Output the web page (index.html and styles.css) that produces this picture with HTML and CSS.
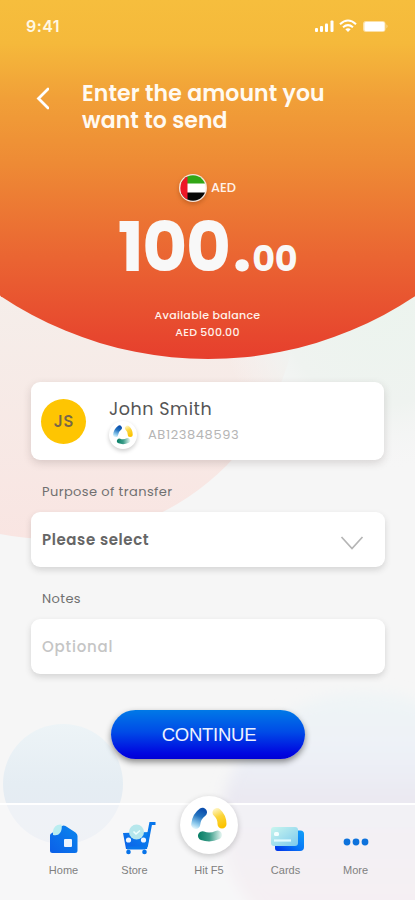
FILE: index.html
```html
<!DOCTYPE html>
<html lang="en">
<head>
<meta charset="utf-8">
<meta name="viewport" content="width=device-width, initial-scale=1">
<title>Send money</title>
<link rel="stylesheet" href="styles.css">
</head>
<body>
<svg class="symbols" width="0" height="0">
  <defs>
    <linearGradient id="swBlue" gradientUnits="userSpaceOnUse" x1="12" y1="3" x2="4" y2="22"><stop offset="0" stop-color="#0c50ae"/><stop offset=".35" stop-color="#2373bf"/><stop offset=".75" stop-color="#90cbed"/><stop offset="1" stop-color="#e8f8fd"/></linearGradient>
    <linearGradient id="swYellow" gradientUnits="userSpaceOnUse" x1="23" y1="2" x2="31" y2="20"><stop offset="0" stop-color="#fff5c4"/><stop offset=".45" stop-color="#fbd53c"/><stop offset="1" stop-color="#fcc300"/></linearGradient>
    <linearGradient id="swGreen" gradientUnits="userSpaceOnUse" x1="8" y1="0" x2="31" y2="0"><stop offset="0" stop-color="#0b8068"/><stop offset=".45" stop-color="#3a9c88"/><stop offset="1" stop-color="#eaf8f4"/></linearGradient>
    <linearGradient id="blue" x1="0" y1="1" x2="1" y2="0"><stop offset="0" stop-color="#0b5fe8"/><stop offset="1" stop-color="#0a86ee"/></linearGradient>
    <linearGradient id="mint" x1="0" y1="0" x2="1" y2="1"><stop offset="0" stop-color="#c9f6ee"/><stop offset="1" stop-color="#7cc9ee"/></linearGradient>
    <linearGradient id="cardBack" x1="0" y1="1" x2="1" y2="0"><stop offset="0" stop-color="#0030e8"/><stop offset=".5" stop-color="#0878f6"/><stop offset="1" stop-color="#12a0f8"/></linearGradient>
  </defs>
  <symbol id="swirl" viewBox="0 0 36 36">
    <g fill="none" stroke-width="9" stroke-linecap="round">
      <path d="M11.500 5.300Q5.500 9.500 4.700 17.500" stroke="url(#swBlue)"/>
      <path d="M26 5.500Q31 10 31 17" stroke="url(#swYellow)"/>
      <path d="M11.500 28.800Q19 31.500 26.500 28" stroke="url(#swGreen)"/>
    </g>
  </symbol>
</svg>
<div class="screen">
  <svg class="backdrop" width="415" height="900" viewBox="0 0 415 900" aria-hidden="true">
    <defs>
      <linearGradient id="sun" gradientUnits="userSpaceOnUse" x1="0" y1="0" x2="0" y2="360">
        <stop offset="0" stop-color="#f6be3d"/><stop offset=".12" stop-color="#f5b93b"/><stop offset=".27" stop-color="#f1a038"/><stop offset=".45" stop-color="#ee8b35"/><stop offset=".72" stop-color="#ea6432"/><stop offset="1" stop-color="#e63e2d"/>
      </linearGradient>
      <linearGradient id="rose" gradientUnits="userSpaceOnUse" x1="0" y1="290" x2="0" y2="540"><stop offset="0" stop-color="#f5eeea"/><stop offset="1" stop-color="#f9e5e2"/></linearGradient>
      <radialGradient id="sage" gradientUnits="userSpaceOnUse" cx="380" cy="310" r="160"><stop offset="0" stop-color="#ecf4ee"/><stop offset=".6" stop-color="#eff3f0"/><stop offset="1" stop-color="#f5f5f5" stop-opacity="0"/></radialGradient>
      <linearGradient id="sky" gradientUnits="userSpaceOnUse" x1="0" y1="723" x2="0" y2="845"><stop offset="0" stop-color="#edf4f7"/><stop offset=".5" stop-color="#e5edf3"/><stop offset="1" stop-color="#e5e9f2"/></linearGradient>
      <linearGradient id="lilac" gradientUnits="userSpaceOnUse" x1="0" y1="690" x2="0" y2="900"><stop offset="0" stop-color="#eff5f6"/><stop offset=".3" stop-color="#edf1f7"/><stop offset=".53" stop-color="#eae8f1"/><stop offset="1" stop-color="#f2e5ea"/></linearGradient>
      <filter id="soft"><feGaussianBlur stdDeviation="7"/></filter>
    </defs>
    <rect width="415" height="900" fill="#f6f6f6"/>
    <circle cx="50" cy="290" r="249" fill="url(#rose)"/>
    <circle cx="380" cy="310" r="160" fill="url(#sage)"/>
    <ellipse cx="363" cy="823" rx="142" ry="131" fill="url(#lilac)" filter="url(#soft)"/>
    <circle cx="63" cy="784" r="60" fill="url(#sky)"/>
    <circle cx="208" cy="-14" r="373" fill="url(#sun)"/>
  </svg>

  <header class="status">
    <span class="clock">9:41</span>
    <svg class="signals" width="76" height="14" viewBox="0 0 76 14" fill="#fff">
      <rect x="1" y="9" width="3" height="4" rx="1"/><rect x="6" y="7" width="3" height="6" rx="1"/><rect x="11" y="4.500" width="3" height="8.500" rx="1"/><rect x="16.500" y="1.500" width="3" height="11.500" rx="1"/>
      <g fill="none" stroke="#fff" stroke-width="2"><path d="M26 5.300Q34 -2.300 42 5.300"/><path d="M29 8.300Q34 4 39 8.300"/></g><path d="M31.300 10.200Q34 8.400 36.700 10.200L34 13Z"/>
      <rect x="49" y="2" width="22.500" height="11" rx="3" opacity=".55"/><rect x="50.500" y="3" width="20" height="9" rx="1.500"/><path d="M72.500 5.300Q74.500 7.300 72.500 9.500Z" opacity=".55"/>
    </svg>
  </header>

  <section class="title-row">
    <svg class="back" width="16" height="24" viewBox="0 0 16 24"><path d="M15 3L5.500 12.500L15 22" fill="none" stroke="#fff" stroke-width="2.800" stroke-linecap="round"/></svg>
    <h1 class="title">Enter the amount you<br>want to send</h1>
  </section>

  <section class="amount">
    <div class="currency">
      <svg class="flag" width="30" height="30" viewBox="0 0 30 30">
        <defs><clipPath id="disc"><circle cx="15" cy="15" r="12.700"/></clipPath></defs>
        <circle cx="15" cy="15" r="14" fill="#f7e5da"/>
        <g clip-path="url(#disc)"><path fill="#fff" d="M0 0h30v30H0z"/><path fill="#31a616" d="M0 0h30v10.500H0z"/><path fill="#080808" d="M0 19.500h30v10.500H0z"/><path fill="#ee1726" d="M0 0h9.500v30H0z"/></g>
      </svg>
      <span class="code">AED</span>
    </div>
    <div class="figure"><span class="whole">100</span><span class="point">.</span><span class="cents">00</span></div>
    <div class="balance"><div class="balance-label">Available balance</div><div class="balance-value">AED 500.00</div></div>
  </section>

  <main class="form">
    <section class="recipient">
      <div class="initials">JS</div>
      <div class="person">
        <div class="name">John Smith</div>
        <div class="account"><span class="mini"><svg width="20" height="20"><use href="#swirl"/></svg></span><span class="number">AB123848593</span></div>
      </div>
    </section>
    <div class="label label-purpose">Purpose of transfer</div>
    <div class="field">
      <span class="chosen">Please select</span>
      <svg class="chevron" width="24" height="16" viewBox="0 0 24 16"><path d="M1.500 2L12 13.500L22.500 2" fill="none" stroke="#b5b5b5" stroke-width="1.700"/></svg>
    </div>
    <div class="label label-notes">Notes</div>
    <div class="field"><span class="placeholder">Optional</span></div>
    <button class="continue">CONTINUE</button>
  </main>

  <nav class="tabs">
    <div class="tab tab-home">
      <svg width="32" height="32" viewBox="0 0 32 32"><path d="M2 12.500Q2 10.500 4 10L14 3Q15.500 2 17.500 3L27.500 9.500Q29.500 11 29.500 13V27.500Q29.500 30 27 30H4.500Q2 30 2 27.500Z" fill="url(#blue)"/><path d="M5 9Q5.500 1 13.500 1.500Q14.500 7 12 10Q10 13 5 12Z" fill="#b9edf0"/><rect x="16" y="16" width="8" height="8" rx="1" fill="#eef5ff"/></svg>
      <span class="tab-text">Home</span>
    </div>
    <div class="tab tab-store">
      <svg width="34" height="34" viewBox="0 0 34 34"><path d="M1 12L28 11L25 28H4Z" fill="url(#blue)"/><path d="M33.500 2.500H28.700L24.500 24.500L22.500 27H5" fill="none" stroke="#0876eb" stroke-width="3"/><circle cx="14.500" cy="11" r="7.500" fill="#b6e7ec"/><path d="M11.500 10.500L14 13L18 9.500" fill="none" stroke="#effffe" stroke-width="1.600"/><circle cx="6.500" cy="19" r="2.600" fill="#f0f6ff"/><circle cx="21.500" cy="19" r="2.600" fill="#f0f6ff"/><circle cx="6.500" cy="31" r="2.300" fill="#0773e9"/><circle cx="22.500" cy="31" r="2.300" fill="#0773e9"/></svg>
      <span class="tab-text">Store</span>
    </div>
    <div class="tab tab-hit">
      <span class="hub"><svg width="36" height="36"><use href="#swirl"/></svg></span>
      <span class="tab-text">Hit F5</span>
    </div>
    <div class="tab tab-cards">
      <svg width="36" height="28" viewBox="0 0 36 28"><path d="M6 6Q6 4.500 8 4.500H31.500Q35 4.500 35 8V21Q35 25 31 25H8.500Q6 25 6 22Z" fill="url(#cardBack)"/><rect x="2" y="1" width="27" height="19" rx="3" fill="url(#mint)"/><rect x="5" y="6" width="5" height="4" rx="1.500" fill="#f3ffff"/><path d="M5 14.500H22" stroke="#e2fbff" stroke-width="2.200"/></svg>
      <span class="tab-text">Cards</span>
    </div>
    <div class="tab tab-more">
      <svg width="26" height="8" viewBox="0 0 26 8" fill="#0d72dc"><circle cx="4" cy="4" r="3.400"/><circle cx="13" cy="4" r="3.400"/><circle cx="22" cy="4" r="3.400"/></svg>
      <span class="tab-text">More</span>
    </div>
  </nav>
</div>
</body>
</html>
```
FILE: styles.css
```css
* { box-sizing: border-box; }
body { margin: 0; font-family: Poppins, Inter, "Liberation Sans", sans-serif; }
.symbols { position: absolute; }
.screen { position: relative; width: 415px; height: 900px; overflow: hidden; display: flex; flex-direction: column; isolation: isolate; }
.backdrop { position: absolute; inset: 0; z-index: -1; }

.status { height: 52px; padding: 0 24px 0 26px; display: flex; justify-content: space-between; align-items: center; color: #fff8e4; }
.clock { font: 600 16px/20px Inter, sans-serif; letter-spacing: .4px; }
.signals { margin-right: 1px; }

.title-row { display: flex; height: 107px; padding: 28px 0 0 33px; }
.back { margin-top: 6px; }
.title { margin: 0 0 0 33px; font-size: 22px; line-height: 27px; font-weight: 600; color: #fffaf2; white-space: nowrap; letter-spacing: .08px; }

.amount { height: 222px; padding-top: 14px; display: flex; flex-direction: column; align-items: center; color: #fff2ea; }
.currency { display: flex; align-items: center; height: 30px; gap: 3px; margin-right: 1px; }
.flag { filter: drop-shadow(0 2px 2px rgba(120, 50, 0, .35)); }
.code { font-size: 13px; font-weight: 500; }
.figure { display: flex; align-items: baseline; height: 84px; line-height: 88px; font-weight: 700; color: #f8f8f8; }
.whole { font-size: 69px; letter-spacing: -1.3px; }
.point { font-size: 66px; margin: 0 1px 0 3px; }
.cents { font-size: 35px; letter-spacing: -.3px; font-weight: 700; }
.balance { margin-top: 20px; text-align: center; font-size: 11px; line-height: 17px; font-weight: 500; white-space: nowrap; }
.balance-label { letter-spacing: .32px; }
.balance-value { letter-spacing: .25px; }

.form { height: 422px; padding: 1px 29px 0 31px; display: flex; flex-direction: column; }
.recipient { width: 353px; height: 78px; border-radius: 9px; background: #fff; box-shadow: 0 3px 9px rgba(60, 40, 40, .17); display: flex; align-items: center; padding-left: 10px; }
.initials { width: 45px; height: 45px; border-radius: 50%; background: #fec502; color: #75664a; font-size: 17px; font-weight: 500; line-height: 45px; text-align: center; }
.person { margin-left: 23px; height: 78px; padding-top: 16px; }
.name { font-size: 17.500px; line-height: 23px; color: #555; letter-spacing: .55px; }
.account { display: flex; align-items: center; gap: 11px; }
.mini { width: 28px; height: 28px; border-radius: 50%; background: #fff; box-shadow: 0 2px 4px rgba(0, 0, 0, .2); display: grid; place-items: center; }
.number { font-size: 13px; color: #b5b5b5; letter-spacing: .6px; }
.label { margin-left: 11px; font-size: 13px; line-height: 18px; color: #707070; letter-spacing: .4px; }
.label-purpose { margin-top: 23px; margin-bottom: 11px; }
.label-notes { margin-top: 23px; margin-bottom: 11px; }
.field { width: 354px; height: 55px; border-radius: 9px; background: #fff; box-shadow: 0 3px 6px rgba(60, 60, 60, .18); display: flex; align-items: center; justify-content: space-between; padding: 0 21px 0 11px; }
.chosen { font-size: 15px; font-weight: 600; color: #666; letter-spacing: .6px; }
.placeholder { font-size: 15px; font-weight: 500; color: #c5c5c5; letter-spacing: .8px; }
.chevron { margin-top: 7px; }
.continue { margin: 36px 0 0 80px; width: 194px; height: 49px; flex: none; border: 0; border-radius: 25px; background: linear-gradient(#0079e7, #004be7 45%, #0007e0 88%, #0000d5); color: #edf1ff; font: 18.500px "Liberation Sans", sans-serif; letter-spacing: -.25px; padding: 1px 0 0 2px; box-shadow: 0 3px 6px rgba(0, 0, 0, .45); }

.tabs { flex: 1; border-top: 2px solid #fff; background: rgba(248, 248, 249, .55); display: grid; grid-template-columns: 28px 71px 71px 78px 75px 65px; padding-top: 17px; }
.tab { height: 55px; display: flex; flex-direction: column; align-items: center; justify-content: space-between; }
.tab-home { grid-column: 2; }
.tab-text { font: 11px/14px "Liberation Sans", sans-serif; color: #808080; white-space: nowrap; }
.tab svg { flex: none; }
.tab-home svg { margin-top: 1px; }
.tab-store svg { margin: -1px 0 0 8px; }
.hub { width: 58px; height: 58px; flex: none; margin-top: -26px; border-radius: 50%; background: #fff; display: grid; place-items: center; box-shadow: 0 2px 6px rgba(0, 0, 0, .2); }
.hub svg { margin-top: -1px; }
.tab-cards svg { margin: 4px 0 0 3px; }
.tab-more svg { margin-top: 16px; }
```
